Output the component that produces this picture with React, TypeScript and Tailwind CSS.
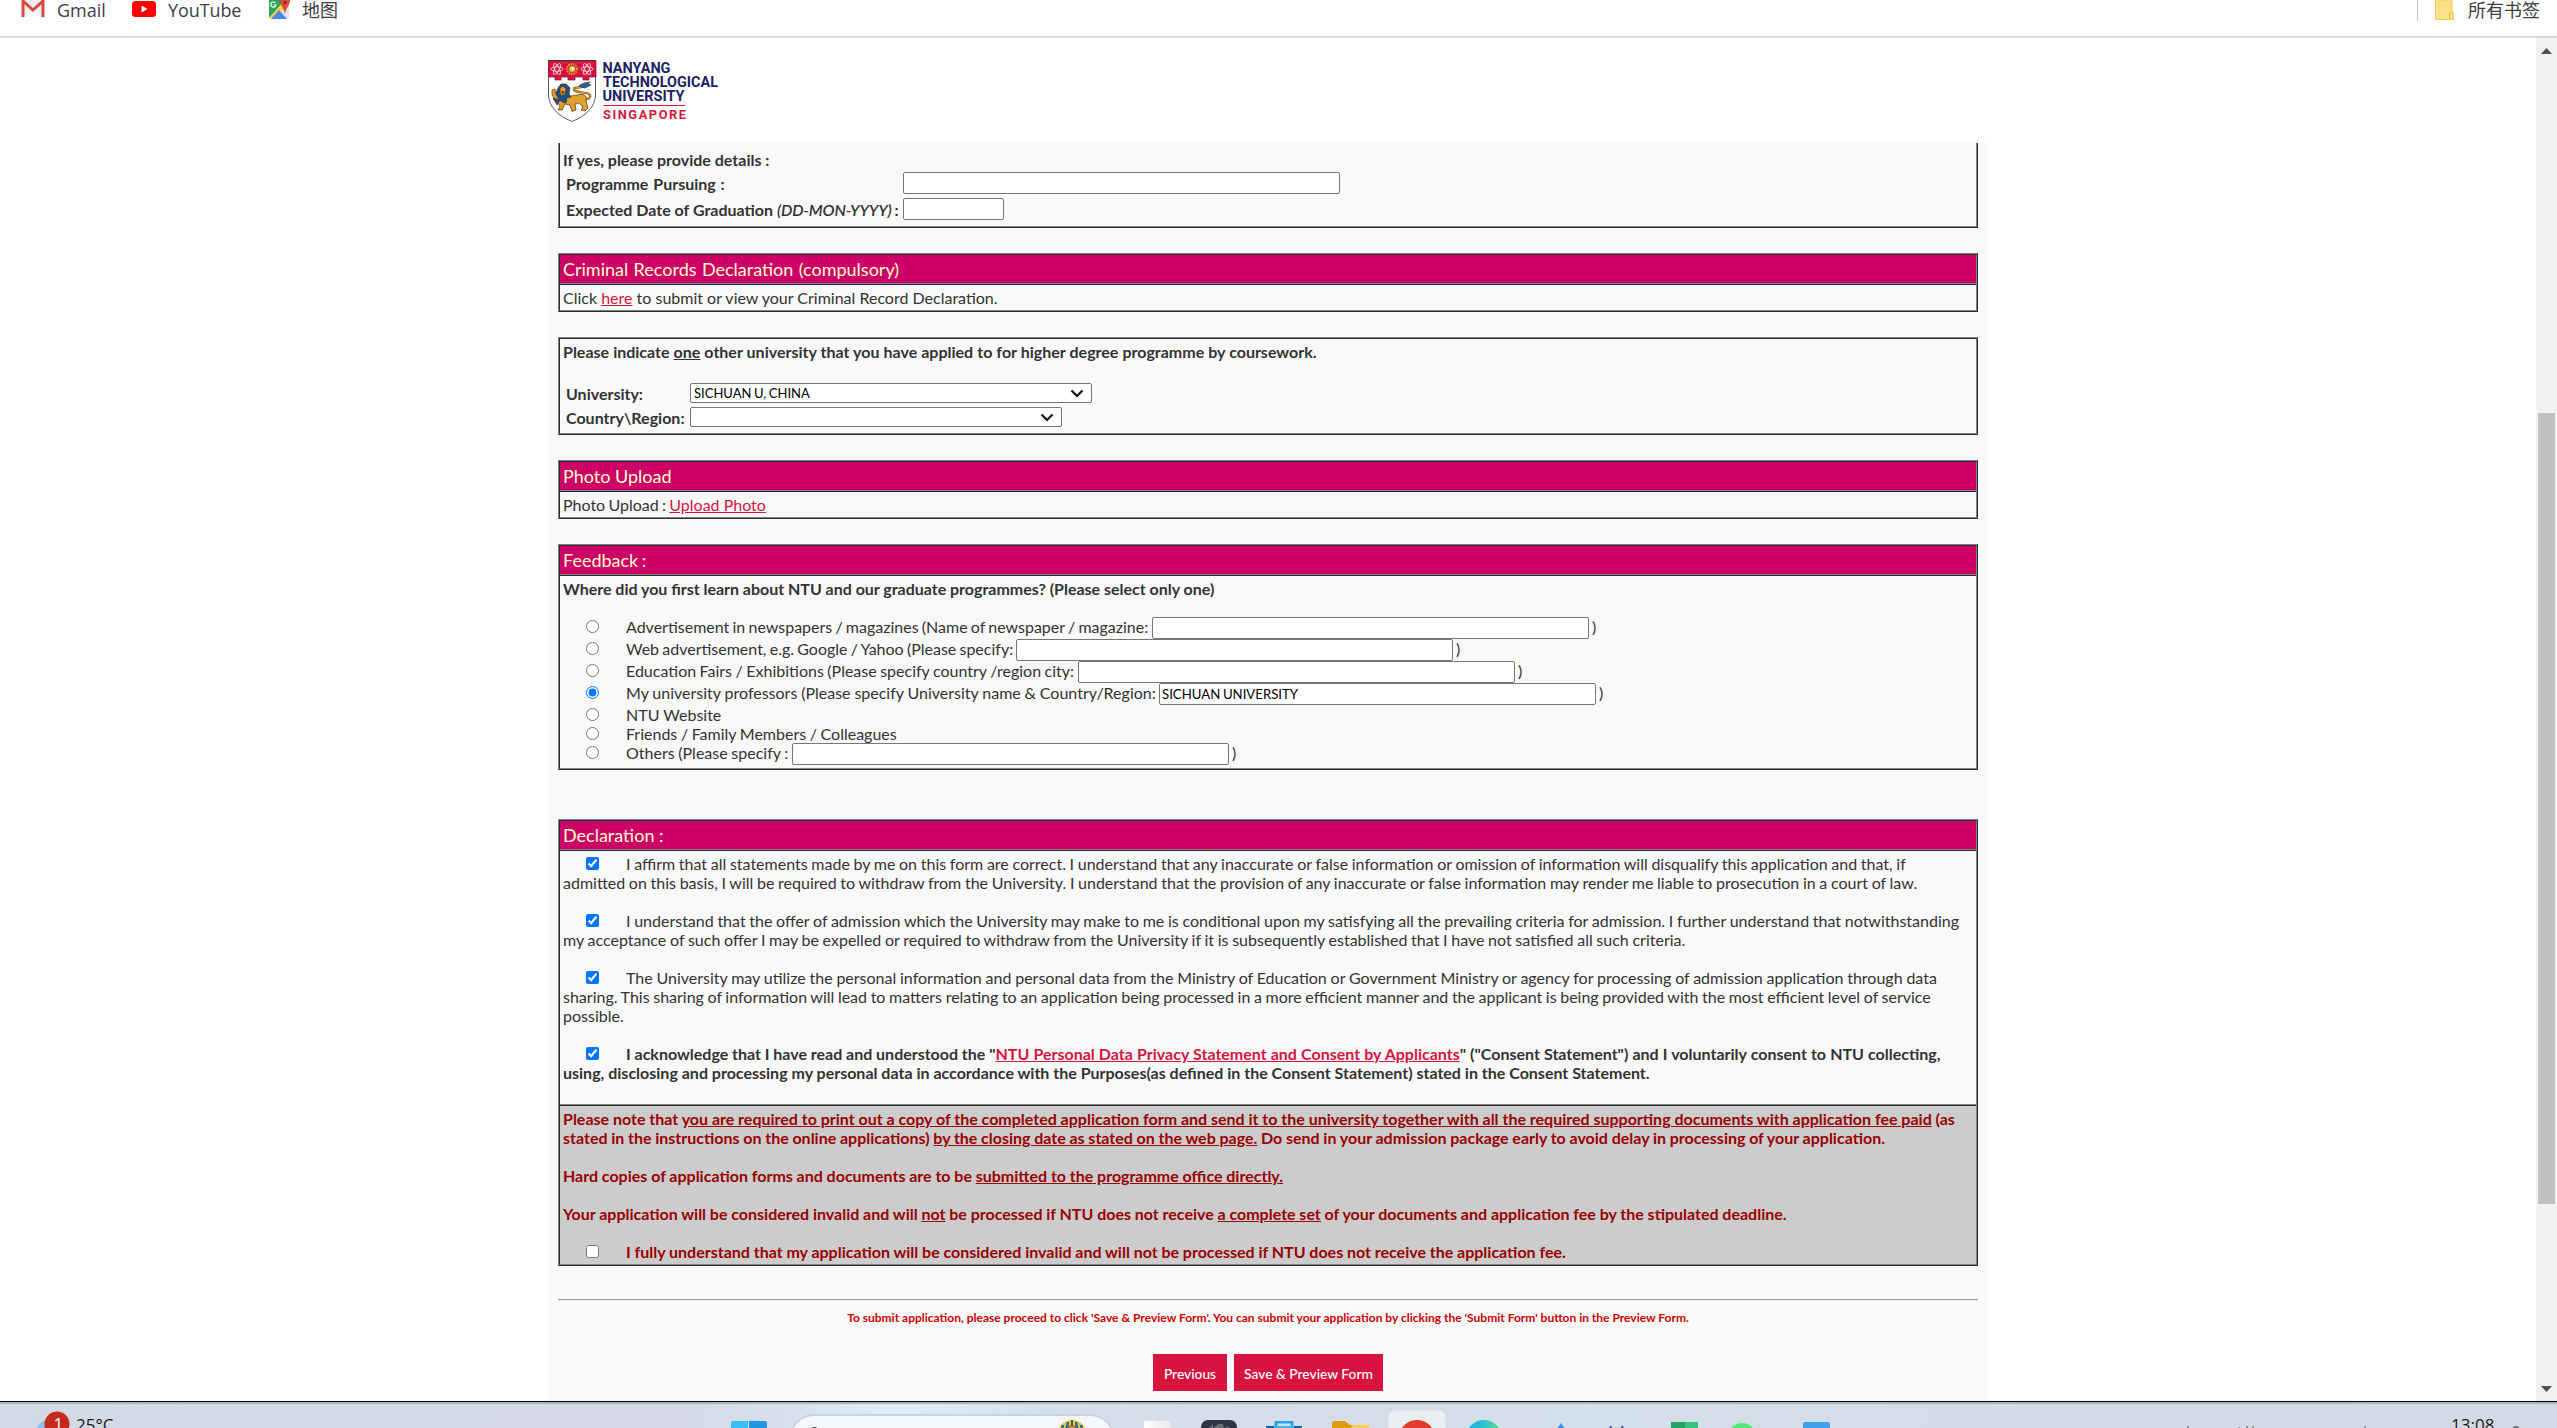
import React from "react";

type Kids = { children?: React.ReactNode };

function Frame({ children, className = "" }: Kids & { className?: string }) {
  return (
    <div className={`border border-t-[#808080] border-l-[#808080] border-r-[#2c2c2c] border-b-[#2c2c2c] ${className}`}>
      <div className="border border-t-[#2c2c2c] border-l-[#2c2c2c] border-r-[#808080] border-b-[#808080]">{children}</div>
    </div>
  );
}

function Rule() {
  return <div className="h-[2px] border-t border-t-[#808080] bg-[#2c2c2c]" />;
}

function Header({ children }: Kids) {
  return (
    <>
      <div className="h-[28px] bg-[#cc0066] p-[3px] text-[18px] leading-[22px] text-[#ffffcc]">{children}</div>
      <Rule />
    </>
  );
}

function Field({ className = "w-[437px]", value = "" }: { className?: string; value?: string }) {
  return (
    <input
      type="text"
      defaultValue={value}
      className={`h-[22px] shrink-0 rounded-[2px] border border-[#767676] bg-white px-[2px] text-[13.2px] [word-spacing:-0.7px] text-black ${className}`}
    />
  );
}

function Select({ value, className }: { value: string; className: string }) {
  return (
    <div className={`flex h-[20px] items-center justify-between rounded-[2px] border border-[#767676] bg-white pr-[7px] pl-[3px] text-[13px] leading-[16px] [word-spacing:-0.7px] text-black ${className}`}>
      <span>{value}</span>
      <svg width="14" height="9" viewBox="0 0 14 9" fill="none" stroke="#101010" strokeWidth="2.2">
        <path d="M1.5 1.5 7 7 12.500 1.500" />
      </svg>
    </div>
  );
}

function Option({ label, field, value, checked, size = "" }: { label: string; field?: boolean; value?: string; checked?: boolean; size?: string }) {
  return (
    <div className={`flex items-start ${field ? "h-[22px]" : "h-[19px]"}`}>
      <input type="radio" name="source" defaultChecked={checked} className="mt-[3px] mr-[27px] ml-[23px] size-[13px] shrink-0" />
      <span className={`shrink-0 whitespace-pre ${size}`}>{label}</span>
      {field && (
        <>
          <Field value={value} />
          <span className="ml-[3px]">)</span>
        </>
      )}
    </div>
  );
}

function Tick({ checked = true }: { checked?: boolean }) {
  return <input type="checkbox" defaultChecked={checked} className="mr-[27px] ml-[23px] inline-block size-[13px] align-[0px]" />;
}

function Logo() {
  return (
    <svg width="172" height="64" viewBox="0 0 172 64" className="block">
      <path d="M.5 16V35C1 47 10 56 24 61.500C38 56 47 47 47.500 35V16Z" fill="#fff" stroke="#333" strokeWidth=".8" />
      <path d="M0 .5H48V17H41V20H35V17H27V20H20V17H13V20H7V17H0Z" fill="#d71440" stroke="#7c1230" strokeWidth=".7" />
      <path d="M0 .5H48" stroke="#333" />
      {[9, 39].map((x) => (
        <g key={x} fill="none" stroke="#f6cfd8" strokeWidth=".9">
          <ellipse cx={x} cy="9" rx="6" ry="2.300" />
          <ellipse cx={x} cy="9" rx="6" ry="2.300" transform={`rotate(60 ${x} 9)`} />
          <ellipse cx={x} cy="9" rx="6" ry="2.300" transform={`rotate(120 ${x} 9)`} />
        </g>
      ))}
      <circle cx="24" cy="9" r="5" fill="none" stroke="#e9a92b" strokeWidth="2" strokeDasharray="1.400 1" />
      <circle cx="24" cy="9" r="3.500" fill="#f2c14a" stroke="#8a2a1a" strokeWidth=".7" />
      <circle cx="25" cy="8.500" r="1.600" fill="#fff" />
      <g stroke="#4a3413" strokeWidth=".7" strokeLinejoin="round">
        <path d="M35 39C43 40 44 35 40 33.500C34 32 24 32 26 28.500C28 26 35 29 37 25" fill="none" stroke="#4a3413" strokeWidth="2.200" />
        <path d="M35 39C43 40 44 35 40 33.500C34 32 24 32 26 28.500C28 26 35 29 37 25" fill="none" stroke="#dc9a2c" strokeWidth="1.300" />
        <path d="M31 25.500 36 23 42 22 40 24 43 25 37 28 33 27Z" fill="#2368a8" />
        <path d="M17 37 29 35C35 33 40 36 38 41L40 48 37 51 33 50 35 47 31 43 27 44 28 50 24 51.500 22 45 17 44 14 50 10 50 12 46 9 42 4 35 4 30 7 29 8 35 13 38Z" fill="#dfa02c" />
        <path d="M10 28 13 24 18 24 22 28 21 34 23 37 19 38 18 43 14 42 10 38 8 33Z" fill="#1d4f8f" />
        <path d="M12 28 15 26 18 29 17 34 14 36 12 33Z" fill="#dfa02c" />
        <path d="M13.500 31.500H16L15 34Z" fill="#c32032" />
        <path d="M5 38 9 45 12 40Z" fill="#1d4f8f" />
      </g>
      <g fontFamily="Roboto, sans-serif" fontWeight="700" fontSize="14.300" fill="#1c2263">
        <text x="54.500" y="12.600" textLength="68" lengthAdjust="spacingAndGlyphs">NANYANG</text>
        <text x="55" y="26.500" textLength="115" lengthAdjust="spacingAndGlyphs">TECHNOLOGICAL</text>
        <text x="54.500" y="40.600" textLength="82" lengthAdjust="spacingAndGlyphs">UNIVERSITY</text>
      </g>
      <path d="M55.500 45.500H137" stroke="#d71440" />
      <text x="55" y="59" textLength="83" fontFamily="Roboto, sans-serif" fontWeight="700" fontSize="12.800" fill="#d71440">SINGAPORE</text>
    </svg>
  );
}

function Bookmarks() {
  return (
    <div className="flex h-[38px] items-start border-b-2 border-[#dcdcdc] bg-white font-['Open_Sans','Noto_Sans_CJK_SC',sans-serif] text-[18px] leading-[24px] text-[#3c4043]">
      <svg className="ml-[21px] shrink-0" width="24" height="18" viewBox="0 0 24 18">
        <path d="M2 0H22V17H2Z" fill="#eee" />
        <path d="M2 17 12 9 22 17Z" fill="#fafafa" />
        <path d="M2 17V1L12 10 22 1V17" fill="none" stroke="#d94b3f" strokeWidth="3" />
      </svg>
      <span className="-mt-[2px] ml-[12px] w-[75px]">Gmail</span>
      <svg className="shrink-0" width="24" height="18" viewBox="0 0 24 18">
        <rect y="1" width="24" height="16" rx="3.500" fill="#f00" />
        <path d="M9.500 5.500V12.500L15.500 9Z" fill="#fff" />
      </svg>
      <span className="-mt-[2px] ml-[12px] w-[100px] tracking-[-0.1px]">YouTube</span>
      <svg className="shrink-0" width="24" height="20" viewBox="0 0 24 20">
        <path d="M1 0H19L1 18Z" fill="#2da45c" />
        <path d="M1 18 16 2 21 7V18Z" fill="#e2e4e6" />
        <path d="M1 18 15 2 19 5 6 19Z" fill="#fbd13c" />
        <path d="M3 19 11 10 19 19Z" fill="#4a86ee" />
        <path d="M12 0H22C22 6 18 7 17 14C16 7 12 6 12 0Z" fill="#e04b3c" />
        <circle cx="17" cy="2.500" r="1.600" fill="#7d221b" />
        <path d="M7.500 3A2.600 2.600 0 1 0 8 5H5.500" fill="none" stroke="#fff" strokeWidth="1.200" />
      </svg>
      <span className="-mt-[2px] ml-[10px] text-[18px]">地图</span>
      <div className="ml-auto h-[21px] w-px bg-[#c8c8c8]" />
      <svg className="ml-[17px] shrink-0" width="19" height="20" viewBox="0 0 19 20">
        <path d="M.5 0H17V12H18.500V19.500H.5Z" fill="#fde08a" stroke="#f0cd57" />
        <path d="M14.500 19V14Q14.500 12.500 16.500 12.500" fill="none" stroke="#e3b93e" />
      </svg>
      <span className="-mt-[2px] mr-[17px] ml-[14px] text-[18px]">所有书签</span>
    </div>
  );
}

function Taskbar() {
  return (
    <div className="h-[27px] shrink-0 overflow-hidden border-t border-black bg-[#d5dbe7]">
      <div className="h-[2px] bg-[#adb2bc]" />
      <div className="flex h-[24px] items-start overflow-hidden bg-[linear-gradient(90deg,#d2dae6_0%,#d6d9e7_26%,#d5e0ea_31%,#e0edf8_35%,#d4e0eb_41%,#d6dce9_47%,#d3dfe9_62%,#d4dce8_76%,#d4d9e6_100%)] font-['Open_Sans',sans-serif] text-[17px] leading-[20px] text-[#1b1b1b]">
        <svg className="mt-[7px] ml-[36px] shrink-0" width="36" height="30" viewBox="0 0 36 30">
          <circle cx="12" cy="21" r="12" fill="#8fc0ef" />
          <circle cx="12" cy="21" r="6" fill="#4c92da" />
          <circle cx="21" cy="13" r="12.500" fill="#c42b1c" />
          <text x="17.500" y="19" fontFamily="Open Sans, sans-serif" fontSize="17" fill="#fff">1</text>
        </svg>
        <span className="mt-[11px] ml-[4px] w-[655px] shrink-0">25°C</span>
        <svg className="mt-[17px] shrink-0" width="36" height="20" viewBox="0 0 36 20">
          <path d="M0 2Q0 0 2 0H17V18H0Z" fill="#3bbdf5" />
          <path d="M18 0H34Q36 0 36 2V18H18Z" fill="#1f97e5" />
        </svg>
        <div className="mt-[10px] ml-[22px] flex h-[50px] w-[326px] shrink-0 items-start justify-between rounded-[25px] border-2 border-[#c9d3df] bg-[#f4f7fb] pr-[24px] pl-[20px]">
          <div className="mt-[11px] h-[10px] w-[7px] rounded-t-full bg-[#444]" />
          <svg className="mt-[4px]" width="34" height="20" viewBox="0 0 34 20">
            <path d="M1 18C2 6 9 0 17 0S32 6 33 18Z" fill="#e4c45d" />
            <path d="M5 18 8 5M10 18 13 2M24 18 21 2M29 18 26 5" stroke="#2d6e84" strokeWidth="2.600" />
            <path d="M13 18V8Q17 3 21 8V18Z" fill="#d9a53c" stroke="#7a3b22" />
            <path d="M17 0V6" stroke="#555" strokeWidth="2" />
          </svg>
        </div>
        <div className="mt-[17px] ml-[29px] h-[20px] w-[27px] shrink-0 rounded-[2px] bg-linear-to-r from-white to-[#e8e8e8]" />
        <svg className="mt-[16px] ml-[30px] shrink-0" width="36" height="24" viewBox="0 0 36 24">
          <rect width="36" height="30" rx="7" fill="#2e3440" />
          <path d="M8 8 12 4V8L17 4 22 4 23 8 28 6V10H8Z" fill="#6b707a" />
        </svg>
        <svg className="mt-[17px] ml-[29px] shrink-0" width="36" height="20" viewBox="0 0 36 20">
          <path d="M10 6V1H26V6" fill="none" stroke="#27a5ea" strokeWidth="3" />
          <path d="M0 5H36V20H0Z" fill="#1160a8" />
          <path d="M8 5H28V8H8Z" fill="#3ab6f5" />
        </svg>
        <svg className="mt-[17px] ml-[30px] shrink-0" width="37" height="20" viewBox="0 0 37 20">
          <path d="M0 2Q0 0 2 0H13L18 4H35Q37 4 37 6V18H0Z" fill="#dd9d0b" />
          <path d="M13 7H18L21 4H37V18H13Z" fill="#ffcf55" />
        </svg>
        <div className="mt-[6px] ml-[19px] flex h-[40px] w-[58px] shrink-0 justify-center rounded-[7px] border border-[#e5e9ee] bg-[#ebeef3]">
          <div className="mt-[9px] size-[36px] shrink-0 rounded-full bg-[#e33b2e]" />
        </div>
        <div className="mt-[16px] ml-[20px] size-[36px] shrink-0 rounded-full bg-linear-to-r from-[#1fa5d8] via-[#2bc3cf] to-[#66dc72]" />
        <svg className="mt-[19px] ml-[52px] shrink-0" width="14" height="10" viewBox="0 0 14 10"><path d="M7 0 14 10H0Z" fill="#3f8fe8" /></svg>
        <svg className="mt-[21px] ml-[41px] shrink-0" width="16" height="6" viewBox="0 0 16 6"><path d="M1 1 3 4M14 1 12 4" stroke="#33609e" strokeWidth="2" /></svg>
        <div className="mt-[18px] ml-[46px] h-[20px] w-[27px] shrink-0 bg-linear-to-r from-[#23a365] from-50% to-[#35c47f] to-50%" />
        <div className="mt-[19px] ml-[30px] size-[28px] shrink-0 rounded-full bg-[#52e67b]" />
        <div className="mt-[18px] ml-[47px] h-[20px] w-[27px] shrink-0 rounded-t-[2px] bg-[#3fa0ee]" />
        <svg className="mt-[21px] ml-[357px] shrink-0" width="180" height="4" viewBox="0 0 180 4"><path d="M1 1V4M52 2V4M60 1V4M66 1V4M178 1V4" stroke="#444" /></svg>
        <span className="mt-[11px] ml-[84px] w-[62px] shrink-0">13:08</span>
        <div className="mt-[22px] h-[4px] w-[6px] shrink-0 rounded-full bg-[#777]" />
      </div>
    </div>
  );
}

const link = "text-[#d71440] underline";

export default function App() {
  return (
    <div className="flex h-[1428px] w-[2557px] flex-col overflow-hidden bg-white font-[Lato,sans-serif] text-[16px] leading-[19px] text-[#333]">
      <Bookmarks />
      <div className="flex h-[1363px] shrink-0">
        <div className="flex min-w-0 flex-1 flex-col pl-[548px]">
          <div className="h-[105px] shrink-0 pt-[22px]">
            <Logo />
          </div>
          <div className="h-[1258px] w-[1440px] bg-[#f9f9f9] px-[10px]">
            <div className="h-[85px] border border-t-0 border-l-[#808080] border-r-[#2c2c2c] border-b-[#2c2c2c]">
              <div className="h-[84px] border border-t-0 border-l-[#2c2c2c] border-r-[#808080] border-b-[#808080] px-[3px] pt-[7px] font-bold">
                <div>If yes, please provide details :</div>
                <div className="mt-[3px] flex h-[26px] pl-[3px]">
                  <span className="mt-[2px] w-[337px] shrink-0 [word-spacing:1px]">Programme Pursuing :</span>
                  <Field />
                </div>
                <div className="flex pl-[3px]">
                  <span className="mt-[2px] w-[337px] shrink-0 whitespace-nowrap">Expected Date of Graduation <i className="font-semibold tracking-[-0.15px]">(DD-MON-YYYY)</i><span className="[word-spacing:-1px]"> :</span></span>
                  <Field className="w-[101px]" />
                </div>
              </div>
            </div>

            <Frame className="mt-[25px]">
              <Header><span className="[word-spacing:0.8px]">Criminal Records Declaration (compulsory)</span></Header>
              <div className="p-[3px]">Click <a className={link}>here</a> to submit or view your Criminal Record Declaration.</div>
            </Frame>

            <Frame className="mt-[25px]">
              <div className="h-[94px] p-[3px] font-bold">
                <div className="[word-spacing:0.15px]">Please indicate <u>one</u> other university that you have applied to for higher degree programme by coursework.</div>
                <div className="mt-[22px] flex h-[24px] pl-[3px]">
                  <span className="mt-px w-[124px]">University:</span>
                  <Select value="SICHUAN U, CHINA" className="w-[402px] font-normal" />
                </div>
                <div className="flex pl-[3px]">
                  <span className="mt-px w-[124px]">Country\Region:</span>
                  <Select value="" className="w-[372px]" />
                </div>
              </div>
            </Frame>

            <Frame className="mt-[25px]">
              <Header>Photo Upload</Header>
              <div className="p-[3px]"><span className="[word-spacing:-0.8px]">Photo Upload : </span><a className={link}>Upload Photo</a></div>
            </Frame>

            <Frame className="mt-[25px]">
              <Header><span className="[word-spacing:-1px]">Feedback :</span></Header>
              <div className="p-[3px]">
                <div className="mb-[19px] font-bold [word-spacing:-0.1px]">Where did you first learn about NTU and our graduate programmes? (Please select only one)</div>
                <Option label="Advertisement in newspapers / magazines (Name of newspaper / magazine:" field size="w-[526px] [word-spacing:-0.9px]" />
                <Option label="Web advertisement, e.g. Google / Yahoo (Please specify:" field size="w-[390px] [word-spacing:-0.9px]" />
                <Option label="Education Fairs / Exhibitions (Please specify country /region city:" field size="w-[452px] [word-spacing:-0.6px]" />
                <Option label="My university professors (Please specify University name & Country/Region:" field value="SICHUAN UNIVERSITY" checked size="w-[533px] [word-spacing:-0.25px]" />
                <Option label="NTU Website" />
                <Option label="Friends / Family Members / Colleagues" size="[word-spacing:-0.5px]" />
                <Option label="Others (Please specify :" field size="w-[166px] [word-spacing:-0.4px]" />
              </div>
            </Frame>

            <Frame className="mt-[49px]">
              <Header>Declaration :</Header>
              <div className="h-[253px] p-[3px] whitespace-nowrap">
                <p className="mb-[19px] [word-spacing:-0.43px]">
                  <Tick />I affirm that all statements made by me on this form are correct. I understand that any inaccurate or false information or omission of information will disqualify this application and that, if<br />
                  admitted on this basis, I will be required to withdraw from the University. I understand that the provision of any inaccurate or false information may render me liable to prosecution in a court of law.
                </p>
                <p className="mb-[19px] [word-spacing:-0.41px]">
                  <Tick />I understand that the offer of admission which the University may make to me is conditional upon my satisfying all the prevailing criteria for admission. I further understand that notwithstanding<br />
                  my acceptance of such offer I may be expelled or required to withdraw from the University if it is subsequently established that I have not satisfied all such criteria.
                </p>
                <p className="mb-[19px]">
                  <span className="[word-spacing:-0.3px]"><Tick />The University may utilize the personal information and personal data from the Ministry of Education or Government Ministry or agency for processing of admission application through data</span><br />
                  <span className="[word-spacing:-0.5px]">sharing. This sharing of information will lead to matters relating to an application being processed in a more efficient manner and the applicant is being provided with the most efficient level of service</span><br />
                  possible.
                </p>
                <p className="font-bold">
                  <span className="[word-spacing:-0.1px]"><Tick />I acknowledge that I have read and understood the "</span><span className="[word-spacing:0.2px]"><a className={link}>NTU Personal Data Privacy Statement and Consent by Applicants</a>" ("Consent Statement") and I voluntarily consent to NTU collecting,</span><br />
                  using, disclosing and processing my personal data in accordance with the Purposes(as defined in the Consent Statement) stated in the Consent Statement.
                </p>
              </div>
              <Rule />
              <div className="h-[158px] bg-[#ccc] p-[3px] font-bold whitespace-nowrap text-[#990000] [word-spacing:-0.1px]">
                <p className="mb-[19px] [word-spacing:-0.05px]">
                  Please note that <u>you are required to print out a copy of the completed application form and send it to the university together with all the required supporting documents with application fee paid</u> (as<br />
                  <span className="[word-spacing:-0.18px]">stated in the instructions on the online applications) <u>by the closing date as stated on the web page.</u> Do send in your admission package early to avoid delay in processing of your application.</span>
                </p>
                <p className="mb-[19px]">Hard copies of application forms and documents are to be <u>submitted to the programme office directly.</u></p>
                <p className="mb-[19px]">Your application will be considered invalid and will <u>not</u> be processed if NTU does not receive <u>a complete set</u> of your documents and application fee by the stipulated deadline.</p>
                <p><Tick checked={false} />I fully understand that my application will be considered invalid and will not be processed if NTU does not receive the application fee.</p>
              </div>
            </Frame>

            <div className="mt-[33px] h-[2px] border-t border-t-[#9a9a9a] bg-[#eee]" />
            <p className="mt-[9px] text-center text-[12px] leading-[16px] font-bold text-[#cc0000]">
              To submit application, please proceed to click 'Save & Preview Form'. You can submit your application by clicking the 'Submit Form' button in the Preview Form.
            </p>
            <div className="mt-[28px] flex h-[37px] justify-center gap-[7px] text-[13.8px] font-medium text-white">
              <button className="w-[74px] bg-[#d71440] pt-px">Previous</button>
              <button className="w-[149px] bg-[#d71440] pt-px whitespace-nowrap">Save & Preview Form</button>
            </div>
          </div>
        </div>
        <div className="flex w-[21px] shrink-0 flex-col items-center bg-[#f1f1f1]">
          <svg className="mt-[10px]" width="11" height="6" viewBox="0 0 11 6"><path d="M5.500 0 11 6H0Z" fill="#505050" /></svg>
          <div className="mt-[359px] h-[791px] w-[17px] bg-[#c1c1c1]" />
          <svg className="mt-[182px]" width="11" height="6" viewBox="0 0 11 6"><path d="M5.500 6 11 0H0Z" fill="#505050" /></svg>
        </div>
      </div>
      <Taskbar />
    </div>
  );
}
